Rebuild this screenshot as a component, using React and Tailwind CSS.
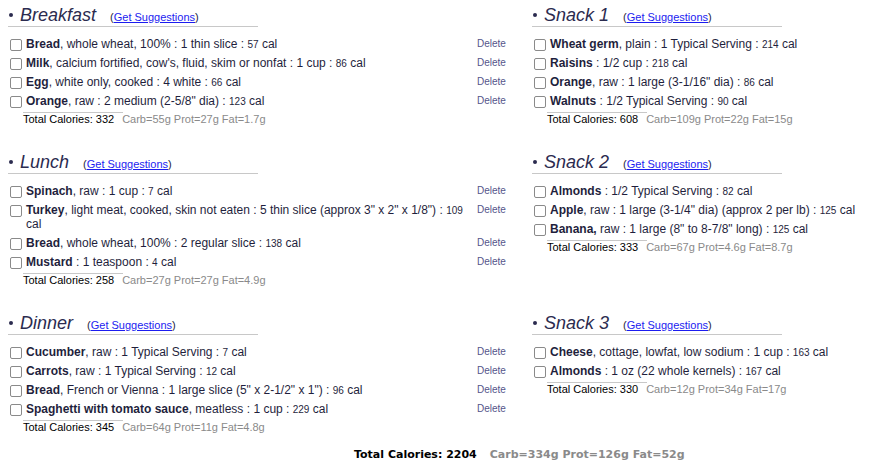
import React from "react";

const meals = {
  breakfast: {
    title: "Breakfast",
    items: [
      ["Bread", ", whole wheat, 100% : 1 thin slice", "57"],
      ["Milk", ", calcium fortified, cow's, fluid, skim or nonfat : 1 cup", "86"],
      ["Egg", ", white only, cooked : 4 white", "66"],
      ["Orange", ", raw : 2 medium (2-5/8\" dia)", "123"],
    ],
    total: "332",
    macros: "Carb=55g Prot=27g Fat=1.7g",
  },
  lunch: {
    title: "Lunch",
    items: [
      ["Spinach", ", raw : 1 cup", "7"],
      ["Turkey", ", light meat, cooked, skin not eaten : 5 thin slice (approx 3\" x 2\" x 1/8\")", "109"],
      ["Bread", ", whole wheat, 100% : 2 regular slice", "138"],
      ["Mustard", " : 1 teaspoon", "4"],
    ],
    total: "258",
    macros: "Carb=27g Prot=27g Fat=4.9g",
  },
  dinner: {
    title: "Dinner",
    items: [
      ["Cucumber", ", raw : 1 Typical Serving", "7"],
      ["Carrots", ", raw : 1 Typical Serving", "12"],
      ["Bread", ", French or Vienna : 1 large slice (5\" x 2-1/2\" x 1\")", "96"],
      ["Spaghetti with tomato sauce", ", meatless : 1 cup", "229"],
    ],
    total: "345",
    macros: "Carb=64g Prot=11g Fat=4.8g",
  },
  snack1: {
    title: "Snack 1",
    items: [
      ["Wheat germ", ", plain : 1 Typical Serving", "214"],
      ["Raisins", " : 1/2 cup", "218"],
      ["Orange", ", raw : 1 large (3-1/16\" dia)", "86"],
      ["Walnuts", " : 1/2 Typical Serving", "90"],
    ],
    total: "608",
    macros: "Carb=109g Prot=22g Fat=15g",
  },
  snack2: {
    title: "Snack 2",
    items: [
      ["Almonds", " : 1/2 Typical Serving", "82"],
      ["Apple", ", raw : 1 large (3-1/4\" dia) (approx 2 per lb)", "125"],
      ["Banana,", " raw : 1 large (8\" to 8-7/8\" long)", "125"],
    ],
    total: "333",
    macros: "Carb=67g Prot=4.6g Fat=8.7g",
  },
  snack3: {
    title: "Snack 3",
    items: [
      ["Cheese", ", cottage, lowfat, low sodium : 1 cup", "163"],
      ["Almonds", " : 1 oz (22 whole kernels)", "167"],
    ],
    total: "330",
    macros: "Carb=12g Prot=34g Fat=17g",
  },
};

function Checkbox() {
  return (
    <span className="mt-[2px] ml-[2px] mr-[4px] block h-[12px] w-[12px] shrink-0 rounded-[2px] border border-[#8a8a8a] bg-white" />
  );
}

function Section({ meal, showDelete }) {
  return (
    <div className="flex flex-col">
      <div className="flex h-[27px] w-[250px] items-baseline border-b border-[#c8c8c8] pt-[4px]">
        <span className="ml-[1px] mr-[7px] block h-[4px] w-[4px] shrink-0 self-center rounded-full bg-[#2b2b4f]" />
        <span className="text-[18px] italic leading-[22px] text-[#2b2b4f]">{meal.title}</span>
        <span className="ml-[14px] text-[11px] leading-[14px] text-[#1f1f3d]">
          (<a href="#" className="text-[#1c1cf0] underline">Get Suggestions</a>)
        </span>
      </div>
      <div className="mt-[8px] flex flex-col">
        {meal.items.map(([name, rest, cal], i) => (
          <div key={i} className="flex items-start pt-[2px] pb-[3px]">
            <Checkbox />
            <div className={(showDelete ? "w-[445px]" : "flex-1") + " text-[12px] leading-[14px] text-[#1f1f3d]"}>
              <b className="font-bold">{name}</b>
              {rest} : <span className="text-[10px] leading-[10px]">{cal}</span> cal
            </div>
            {showDelete && (
              <span className="ml-[6px] text-[10px] leading-[14px] text-[#55558a]">Delete</span>
            )}
          </div>
        ))}
      </div>
      <div className="ml-[15px] mt-[1px] w-[100px] border-t border-[#c8c8c8]" />
      <div className="ml-[15px] flex whitespace-nowrap text-[11px] leading-[12px]">
        <span className="text-black">Total Calories: {meal.total}</span>
        <span className="ml-[8px] text-[#8a8a8a]">{meal.macros}</span>
      </div>
    </div>
  );
}

export default function App() {
  return (
    <div
      className="h-[462px] w-[881px] overflow-hidden bg-white"
      style={{ fontFamily: '"Liberation Sans", Arial, sans-serif' }}
    >
      <div className="grid grid-cols-[524px_1fr] gap-y-[22px] pl-[8px]">
        <Section meal={meals.breakfast} showDelete />
        <Section meal={meals.snack1} />
        <Section meal={meals.lunch} showDelete />
        <Section meal={meals.snack2} />
        <Section meal={meals.dinner} showDelete />
        <Section meal={meals.snack3} />
      </div>
      <div
        className="mt-[15px] flex pl-[354px] text-[11px] font-bold leading-[13px]"
        style={{ fontFamily: '"DejaVu Sans", Verdana, sans-serif' }}
      >
        <span className="text-black">Total Calories: 2204</span>
        <span className="ml-[13px] text-[#8a8a8a]">Carb=334g Prot=126g Fat=52g</span>
      </div>
    </div>
  );
}
